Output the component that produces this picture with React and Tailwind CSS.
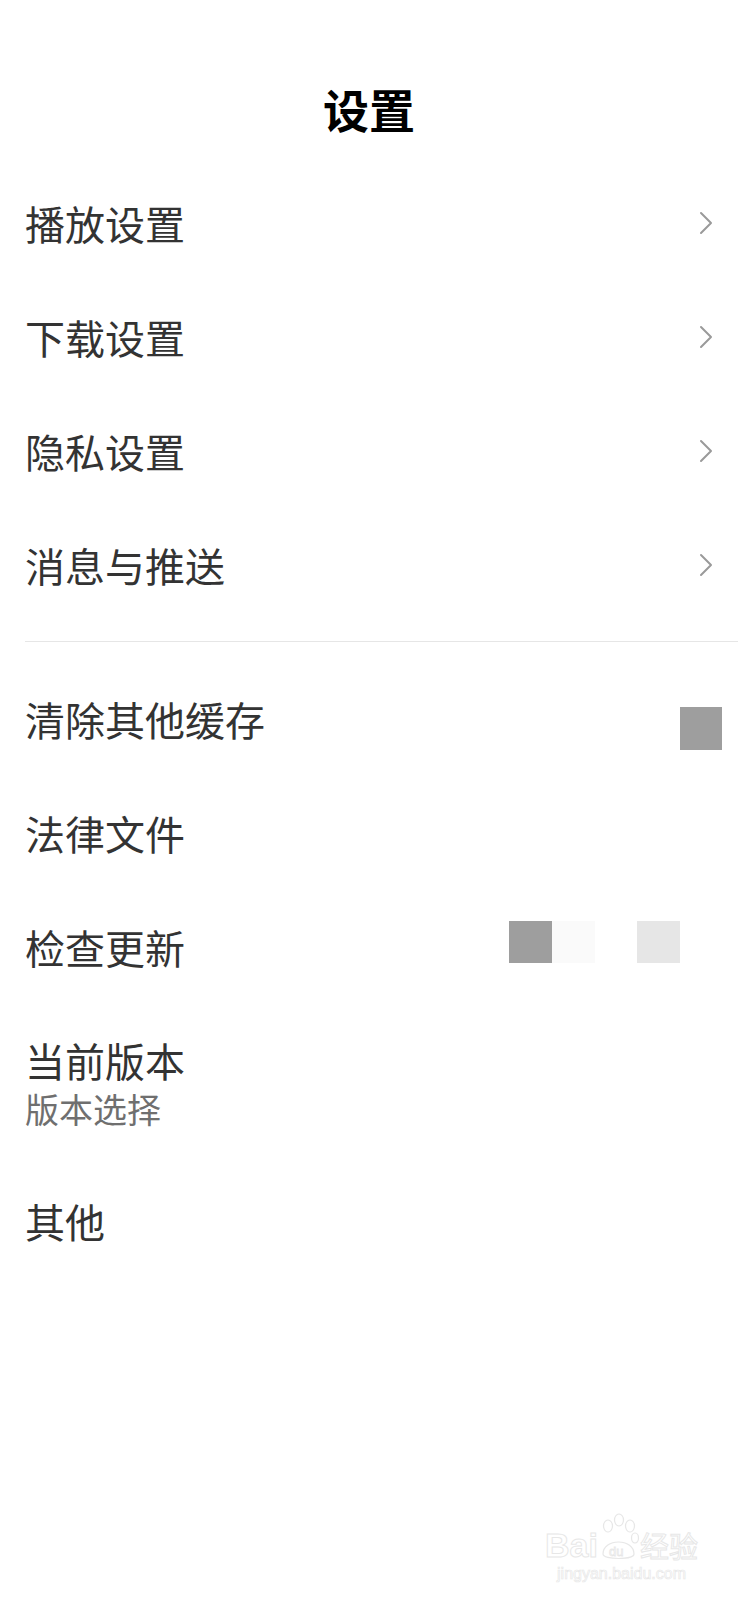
import React from "react";

const font = "font-['Noto_Sans_CJK_SC','Noto_Sans',sans-serif]";

/* ===================== CHEVRON ===================== */
const Chevron = () => (
  <svg width="14" height="24" viewBox="0 0 14 24" fill="none">
    <polyline
      points="2,2 12,12 2,22"
      stroke="#9a9a9a"
      strokeWidth="2"
      strokeLinecap="round"
      strokeLinejoin="round"
    />
  </svg>
);

/* ===================== ROW ===================== */
const Row = ({ label, sub, right, className = "h-[114px]" }) => (
  <div className={`flex items-center justify-between pl-[25px] ${className}`}>
    <div className="flex flex-col">
      <span className="text-[40px] leading-[50px] text-[#333333]">{label}</span>
      {sub && (
        <span className="text-[34px] leading-[48px] text-[#6f6f6f]">{sub}</span>
      )}
    </div>
    {right}
  </div>
);

/* ===================== WATERMARK ===================== */
const Watermark = () => (
  <div className="absolute right-[40px] bottom-[16px] flex flex-col items-center opacity-60 select-none">
    <div className="flex items-end">
      <span className="text-[34px] leading-[34px] font-bold text-transparent [-webkit-text-stroke:1px_#d8d8d8] font-['Liberation_Sans',sans-serif]">
        Bai
      </span>
      <svg width="42" height="50" viewBox="0 0 42 50" fill="none" stroke="#d8d8d8" strokeWidth="1.2">
        <ellipse cx="10" cy="14" rx="4.5" ry="6" />
        <ellipse cx="21" cy="8" rx="4.5" ry="6" />
        <ellipse cx="32" cy="14" rx="4.5" ry="6" />
        <ellipse cx="37" cy="26" rx="3.5" ry="5" />
        <path d="M5 42 C5 26 36 26 36 42 C36 48 5 48 5 42 Z" />
        <text x="11" y="44" fontSize="13" fill="none" stroke="#d8d8d8" strokeWidth="0.8" fontFamily="Liberation Sans">du</text>
      </svg>
      <span className="text-[29px] leading-[34px] text-transparent [-webkit-text-stroke:1px_#d8d8d8] font-['Noto_Sans_CJK_SC',sans-serif]">
        经验
      </span>
    </div>
    <span className="mt-[2px] text-[16px] leading-[20px] text-transparent [-webkit-text-stroke:0.7px_#d8d8d8] font-['Liberation_Sans',sans-serif]">
      jingyan.baidu.com
    </span>
  </div>
);

export default function App() {
  return (
    <div className={`relative w-[738px] min-h-[1600px] bg-white ${font}`}>
      {/* TITLE */}
      <div className="pt-[78px] h-[166px] text-center">
        <h1 className="text-[46px] leading-[60px] font-bold text-black">设置</h1>
      </div>

      {/* GROUP 1 */}
      <div className="pr-[25px]">
        <Row label="播放设置" right={<Chevron />} />
        <Row label="下载设置" right={<Chevron />} />
        <Row label="隐私设置" right={<Chevron />} />
        <Row label="消息与推送" right={<Chevron />} />
      </div>

      <div className="mt-[19px] ml-[25px] h-px bg-[#e6e6e6]" />

      {/* GROUP 2 */}
      <div className="mt-[20px]">
        <Row
          label="清除其他缓存"
          className="h-[114px] pr-[16px]"
          right={<div className="mt-[18px] w-[42px] h-[43px] bg-[#9e9e9e]" />}
        />
        <Row label="法律文件" />
        <Row
          label="检查更新"
          className="h-[114px] pr-[58px]"
          right={
            <div className="mb-[10px] flex">
              <div className="w-[43px] h-[42px] bg-[#9e9e9e]" />
              <div className="w-[43px] h-[42px] bg-[#fafafa]" />
              <div className="w-[42px] h-[42px]" />
              <div className="w-[43px] h-[42px] bg-[#e6e6e6]" />
            </div>
          }
        />
        <Row label="当前版本" sub="版本选择" className="h-[160px]" />
        <Row label="其他" />
      </div>

      <Watermark />
    </div>
  );
}
